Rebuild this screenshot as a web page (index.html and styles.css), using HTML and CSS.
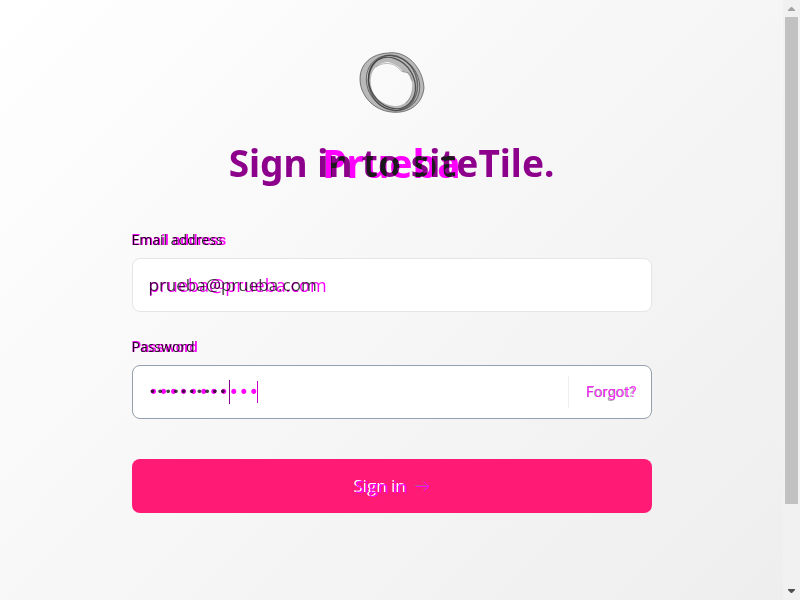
FILE: index.html
```
<!DOCTYPE html>
<html lang="en">
<head>
<meta charset="utf-8">
<title>Sign in to siteTile.</title>
<link rel="stylesheet" href="styles.css">
</head>
<body>
<svg class="defs" aria-hidden="true"><filter id="compare" color-interpolation-filters="sRGB">
<feColorMatrix values=".9 .45 0 0 -.35  -.1 0 0 0 .1  .9 .45 0 0 -.35  0 0 0 1 0"/>
</filter></svg>
<main class="page">
<form class="signin">
<svg class="logo" viewBox="0 0 66 62" aria-hidden="true">
<path fill="#777" fill-opacity=".5" fill-rule="evenodd" d="M29 1C47-2 64 15 65 36C63 54 48 62 32 60C14 58 1 43 1 27C1 12 12 2 29 1ZM29 10C17 11 10 20 12 33C14 47 26 54 38 54C49 53 55 42 54 30C50 28 52 20 44 20C40 14 36 12 29 10Z"/>
<g fill="none" stroke="#333">
<ellipse cx="33" cy="31" rx="22" ry="27" transform="rotate(-32 33 31)" stroke-width="1.2" stroke-opacity=".8"/>
<ellipse cx="34" cy="31" rx="24" ry="28" transform="rotate(-20 34 31)" stroke-width="1.5" stroke-opacity=".6"/>
<ellipse cx="34" cy="31" rx="29" ry="25" transform="rotate(50 34 31)" stroke-opacity=".6"/>
<path stroke-opacity=".6" d="M29 1C47-2 64 15 65 36C63 54 48 62 32 60C14 58 1 43 1 27C1 12 12 2 29 1Z"/>
<path stroke-opacity=".3" d="M17 15C25 9 37 11 41 18C45 22 50 18 52 25C55 33 54 44 47 51"/>
</g>
</svg>
<h1 class="title layered"><span>Sign in to siteTile.</span><span class="over">Prueba</span></h1>
<div class="field">
<label class="layered" for="email"><span>Email address</span><span class="over" aria-hidden="true">Email address</span></label>
<div class="box layered"><input id="email" type="email" value="prueba@prueba.com"><span class="over" aria-hidden="true">prueba@prueba.com</span></div>
</div>
<div class="field">
<label class="layered" for="password"><span>Password</span><span class="over" aria-hidden="true">Password</span></label>
<div class="box focused layered"><input id="password" type="password" value="prueba1234"><i class="caret first"></i><span class="over dots" aria-hidden="true">•••••••••••</span><i class="caret second"></i><a class="forgot" href="#"><span class="layered"><span>Forgot?</span><span class="over" aria-hidden="true">Forgot?</span></span></a></div>
</div>
<button class="submit" type="submit"><span class="layered"><span>Sign in</span><span class="over" aria-hidden="true">Sign in</span></span><svg class="arrow" viewBox="0 0 15 12" aria-hidden="true"><g fill="none"><path stroke="#bb5584" d="M0 5.5H13M8 1L13 5.5L8 10"/><path stroke="#f0f" d="M1 6.5H14M9 2L14 6.5L9 11"/></g></svg></button>
</form>
</main>
<div class="scrollbar" aria-hidden="true"><svg viewBox="0 0 17 17"><path fill="#a3a3a3" d="M8 7H9L12 10V11H5V10Z"/></svg><div class="track"><div class="thumb"></div></div><svg viewBox="0 0 17 17"><path fill="#505050" d="M5 6H12V7L9 10H8L5 7Z"/></svg></div>
</body>
</html>
```
FILE: styles.css
```
* { box-sizing: border-box; }
body { margin: 0; display: flex; min-height: 100vh; font: 14px/20px "Open Sans", sans-serif; color: #222; }
.defs { position: absolute; width: 0; height: 0; }
.page { flex: 1; padding: 52px 16px 80px; background: linear-gradient(135deg, #fff, #eee); }
.signin { max-width: 520px; margin: 0 auto; display: flex; flex-direction: column; }
.logo { width: 66px; height: 62px; align-self: center; }
.layered { position: relative; }
.over { position: absolute; left: 0; top: 0; color: #f0f; white-space: nowrap; pointer-events: none; mix-blend-mode: multiply; }
.title { margin: 24px 0 42px; text-align: center; font: 700 37px/50px "Noto Sans", sans-serif; color: #f00; filter: url(#compare); }
.title .over { width: 100%; color: #ff0; font-size: 39px; mix-blend-mode: difference; }
.field { margin-bottom: 25px; }
label { display: block; margin-bottom: 8px; }
label .over { font: 500 15px/20px Roboto, sans-serif; }
.box { display: flex; align-items: center; height: 54px; padding: 0 16px; background: #fff; border: 1px solid #e5e5e5; border-radius: 8px; }
.focused { border-color: #94a0ad; }
input { flex: 1; min-width: 0; padding: 0; border: 0; outline: 0; background: none; font: 17px/24px "Open Sans", sans-serif; color: #444; }
input[type="password"] { font: 13px/24px "DejaVu Sans Mono", monospace; }
.box > .over { left: 16px; top: 14px; font: 18px/24px "Open Sans", sans-serif; }
.box > .dots { font: 17px/24px "DejaVu Sans", sans-serif; }
.caret { position: absolute; width: 1px; }
.first { left: 96px; top: 14px; height: 24px; background: #808; }
.second { left: 124px; top: 15px; height: 22px; background: #c0c; }
.forgot { border-left: 1px solid #eee; padding: 6px 0 6px 17px; color: #aaa; text-decoration: none; }
.forgot .over { font: 15px/20px Roboto, sans-serif; mix-blend-mode: normal; opacity: .8; }
.submit { display: flex; justify-content: center; align-items: center; gap: 9px; height: 54px; margin-top: 15px; border: 0; border-radius: 8px; background: #ff1a75; color: #fff; font: 17px/24px "Open Sans", sans-serif; }
.submit .over { left: 2px; top: 1px; mix-blend-mode: normal; }
.arrow { width: 15px; height: 12px; }
.scrollbar { flex: none; width: 17px; background: #f1f1f1; display: flex; flex-direction: column; }
.scrollbar svg { width: 17px; height: 17px; }
.track { flex: 1; padding: 0 2px; display: flex; flex-direction: column; }
.thumb { height: 86%; background: #c1c1c1; }
```
